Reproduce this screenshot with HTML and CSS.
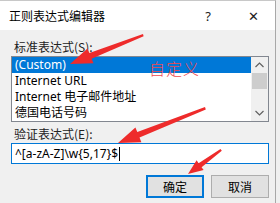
FILE: index.html
```html
<!DOCTYPE html>
<html lang="zh-CN">
<head>
    <meta charset="UTF-8">
    <title>正则表达式编辑器</title>
    <link rel="stylesheet" href="styles.css">
</head>
<body>
    <div class="dialog">
        <div class="titlebar">
            <span class="title">正则表达式编辑器</span>
            <span class="tb-btn">?</span>
            <span class="tb-btn close">✕</span>
        </div>
        <div class="content">
            <div class="label">标准表达式(<u>S</u>):</div>
            <div class="listbox">
                <div class="items">
                    <div class="item selected">(Custom)</div>
                    <div class="item">Internet URL</div>
                    <div class="item">Internet 电子邮件地址</div>
                    <div class="item">德国电话号码</div>
                </div>
                <div class="scrollbar">
                    <div class="sb-arrow">
                        <svg width="9" height="6" viewBox="0 0 9 6"><path d="M0.5 5 L4.5 1 L8.5 5" fill="none" stroke="#606060" stroke-width="1.2"/></svg>
                    </div>
                    <div class="sb-thumb"></div>
                    <div class="sb-track"></div>
                    <div class="sb-arrow">
                        <svg width="9" height="6" viewBox="0 0 9 6"><path d="M0.5 1 L4.5 5 L8.5 1" fill="none" stroke="#606060" stroke-width="1.2"/></svg>
                    </div>
                </div>
            </div>
            <div class="label second">验证表达式(<u>E</u>):</div>
            <div class="input">^[a-zA-Z]\w{5,17}$<span class="caret"></span></div>
            <div class="buttons">
                <button class="btn default">确定</button>
                <button class="btn">取消</button>
            </div>
        </div>
    </div>

    <!-- annotations drawn over the dialog -->
    <span class="note">自定义</span>
    <svg class="arrows" width="280" height="203" viewBox="0 0 280 203">
        <polygon points="143,34 89.4,53.1 87.5,48.5 70,64 93.5,63.3 91.6,58.7 143.6,36.2" />
        <polygon points="205,107 137.3,132 135.4,127.4 118,143 141.4,142.2 139.5,137.6 205.8,109.4" />
        <polygon points="220.5,149 198.6,163.2 196.6,160.3 188,174 203.6,170.1 201.6,167.2 221.8,150.8" />
    </svg>
</body>
</html>
```

FILE: styles.css
```css
body {
    margin: 0;
    width: 280px;
    height: 203px;
    overflow: hidden;
    background: #f0f0f0;
    font-family: "Segoe UI", "Noto Sans", "Noto Sans CJK SC", sans-serif;
    font-size: 12px;
    color: #000;
    position: relative;
}
.dialog {
    width: 276px;
    height: 203px;
    border-right: 1px solid #a8a8a8;
    border-top: 1px solid #c8c8c8;
    box-sizing: border-box;
}
.titlebar {
    height: 29px;
    background: #fff;
    display: flex;
    align-items: center;
}
.title {
    flex: 1;
    padding-left: 9px;
    font-family: "Noto Sans CJK SC", sans-serif;
    font-size: 12px;
}
.tb-btn {
    width: 46px;
    text-align: center;
    font-size: 13px;
    color: #222;
}
.tb-btn.close {
    width: 44px;
}
.content {
    padding: 9px 6px 0 11px;
}
.label {
    height: 16px;
    line-height: 16px;
    padding-left: 3px;
    font-family: "Noto Sans CJK SC", sans-serif;
    color: #222;
}
.label u {
    text-decoration: none;
}
.label.second {
    margin-top: 4px;
}
.listbox {
    margin-top: 1px;
    width: 258px;
    height: 66px;
    border: 1px solid #828790;
    box-sizing: border-box;
    background: #fff;
    display: flex;
}
.items {
    flex: 1;
}
.item {
    height: 16px;
    line-height: 16px;
    padding-left: 3px;
    white-space: nowrap;
}
.item.selected {
    background: #0078d7;
    color: #fff;
}
.scrollbar {
    width: 17px;
    background: #f0f0f0;
    display: flex;
    flex-direction: column;
}
.sb-arrow {
    height: 16px;
    display: flex;
    align-items: center;
    justify-content: center;
}
.sb-thumb {
    height: 16px;
    margin: 0 1px;
    background: #cdcdcd;
}
.sb-track {
    flex: 1;
}
.input {
    margin-top: 1px;
    width: 258px;
    height: 21px;
    border: 1px solid #0078d7;
    box-sizing: border-box;
    background: #fff;
    padding-left: 3px;
    display: flex;
    align-items: center;
}
.caret {
    display: inline-block;
    width: 1px;
    height: 14px;
    background: #000;
    margin-left: 1px;
}
.buttons {
    display: flex;
    justify-content: flex-end;
    gap: 7px;
    width: 258px;
    margin-top: 11px;
}
.btn {
    width: 58px;
    height: 23px;
    padding: 0;
    background: #e1e1e1;
    border: 1px solid #adadad;
    font-family: "Noto Sans CJK SC", sans-serif;
    font-size: 12px;
    color: #000;
}
.btn.default {
    border: 2px solid #0078d7;
}
.note {
    position: absolute;
    left: 149px;
    top: 56px;
    font-family: "Noto Sans CJK SC", sans-serif;
    font-size: 16px;
    font-weight: 300;
    color: #f04a50;
    letter-spacing: 1px;
}
.arrows {
    position: absolute;
    left: 0;
    top: 0;
}
.arrows polygon {
    fill: #ee2b2b;
}
```
